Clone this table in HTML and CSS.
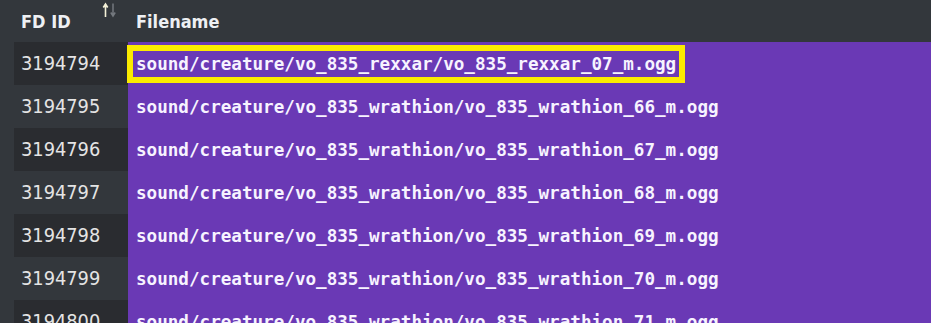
FILE: index.html
```html
<!DOCTYPE html>
<html>
<head>
<meta charset="utf-8">
<link rel="stylesheet" href="styles.css">
</head>
<body>
<div class="table">
  <div class="row head">
    <div class="cell id">FD ID
      <svg class="sort" width="16" height="16" viewBox="0 0 16 16">
        <path d="M4.5 15V2.5 M2.3 5.5 L4.5 2 L6.7 5.5" stroke="#f4f1d8" stroke-width="1.6" fill="none"/>
        <path d="M12 1.5V14 M9.8 10.5 L12 14 L14.2 10.5" stroke="#74787e" stroke-width="1.5" fill="none"/>
      </svg>
    </div>
    <div class="cell name">Filename</div>
  </div>
  <div class="row odd">
    <div class="cell id">3194794</div>
    <div class="cell name"><span class="mark">sound/creature/vo_835_rexxar/vo_835_rexxar_07_m.ogg</span></div>
  </div>
  <div class="row">
    <div class="cell id">3194795</div>
    <div class="cell name">sound/creature/vo_835_wrathion/vo_835_wrathion_66_m.ogg</div>
  </div>
  <div class="row odd">
    <div class="cell id">3194796</div>
    <div class="cell name">sound/creature/vo_835_wrathion/vo_835_wrathion_67_m.ogg</div>
  </div>
  <div class="row">
    <div class="cell id">3194797</div>
    <div class="cell name">sound/creature/vo_835_wrathion/vo_835_wrathion_68_m.ogg</div>
  </div>
  <div class="row odd">
    <div class="cell id">3194798</div>
    <div class="cell name">sound/creature/vo_835_wrathion/vo_835_wrathion_69_m.ogg</div>
  </div>
  <div class="row">
    <div class="cell id">3194799</div>
    <div class="cell name">sound/creature/vo_835_wrathion/vo_835_wrathion_70_m.ogg</div>
  </div>
  <div class="row odd">
    <div class="cell id">3194800</div>
    <div class="cell name">sound/creature/vo_835_wrathion/vo_835_wrathion_71_m.ogg</div>
  </div>
</div>
</body>
</html>
```

FILE: styles.css
```css
html, body {
  margin: 0;
  padding: 0;
  background: #33373c;
  height: 100%;
  overflow: hidden;
}
.table {
  padding-left: 14px;
  display: flex;
  flex-direction: column;
}
.row {
  display: grid;
  grid-template-columns: 114px 1fr;
  height: 43px;
}
.row.head {
  height: 42px;
}
.cell {
  display: flex;
  align-items: center;
  color: #e4e4e4;
}
.id {
  padding-left: 7px;
  font-family: "DejaVu Sans Condensed", "DejaVu Sans", sans-serif;
  font-stretch: condensed;
  font-size: 19.8px;
}
.row.odd .id {
  background: #2a2c30;
}
.head .cell {
  font-family: "DejaVu Sans Condensed", "DejaVu Sans", sans-serif;
  font-stretch: condensed;
  font-weight: bold;
  font-size: 18px;
  color: #eef0f3;
  position: relative;
}
.head .name {
  background: #33373c;
  padding-left: 8px;
}
.sort {
  position: absolute;
  left: 87px;
  top: 2px;
}
.name {
  background: #6a39b5;
  padding-left: 8px;
  font-family: "DejaVu Sans Mono", monospace;
  font-weight: bold;
  font-size: 17.6px;
  color: #f7f3ff;
  white-space: nowrap;
}
.mark {
  outline: 6px solid #fbeb00;
  outline-offset: 3px;
}
```
